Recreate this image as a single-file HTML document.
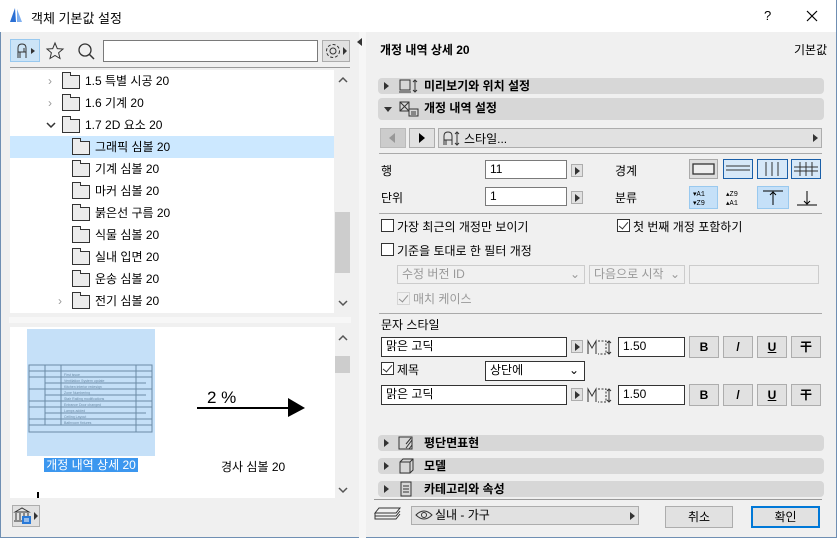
<!DOCTYPE html>
<html><head><meta charset="utf-8"><style>
*{margin:0;padding:0;box-sizing:border-box}
body{width:837px;height:538px;overflow:hidden;background:#f0f0f0;font-family:"Liberation Sans","Noto Sans CJK KR","NanumGothic",sans-serif;font-size:12px;color:#000;position:relative}
.a{position:absolute}
.b{font-weight:bold}
.inp{position:absolute;background:#fff;border:1px solid #7a7a7a;padding-left:4px;line-height:17px}
.arr{position:absolute;width:12px;height:13px;background:#e1e1e1;border:1px solid #adadad}
.arr:after{content:"";position:absolute;left:3px;top:2px;border-left:5px solid #333;border-top:4px solid transparent;border-bottom:4px solid transparent}
.btn{position:absolute;background:#e1e1e1;border:1px solid #adadad;text-align:center}
.bar{position:absolute;left:378px;width:446px;background:#d7d7d7;border-radius:4px;height:16px}
.bar .t{position:absolute;left:6px;top:4px;border-left:5px solid #333;border-top:4px solid transparent;border-bottom:4px solid transparent}
.bar .l{position:absolute;left:46px;top:0;line-height:16px;font-weight:bold}
.cb{position:absolute;width:13px;height:13px;border:1px solid #333;background:#fff}
.ck:after{content:"";position:absolute;left:3px;top:0px;width:4px;height:8px;border-right:1.5px solid #333;border-bottom:1.5px solid #333;transform:rotate(40deg)}
.row{position:absolute;height:22px;line-height:22px;left:10px;width:324px}
.fold{position:absolute;width:18px;height:14px;border:1px solid #333;background:#ececec;top:5px}
.fold:before{content:"";position:absolute;left:-1px;top:-4px;width:7px;height:3px;border:1px solid #333;border-bottom:none;background:#ececec}
.dd{position:absolute;border:1px solid #ccc;background:#f0f0f0;color:#999;padding-left:4px;line-height:17px}
</style></head><body>
<div class="a" style="left:0;top:0;width:837px;height:32px;background:#fff"></div>
<svg class="a" style="left:9px;top:7px" width="14" height="16"><path d="M1 15 L6 1 L7 15Z" fill="#2a6fd4"/><path d="M8 15 L8 2 L13 15Z" fill="#7fb0f0"/></svg>
<div class="a" style="left:31px;top:8px;font-size:13px">객체 기본값 설정</div>
<div class="a" style="left:764px;top:8px;font-size:13px">?</div>
<svg class="a" style="left:806px;top:10px" width="12" height="12"><path d="M1 1L11 11M11 1L1 11" stroke="#000" stroke-width="1.2"/></svg>
<div class="a" style="left:0;top:32px;width:1px;height:506px;background:#6f8fb3"></div>
<div class="a" style="left:836px;top:0;width:1px;height:538px;background:#6f8fb3"></div>
<div class="a" style="left:0;top:537px;width:837px;height:1px;background:#6f8fb3"></div>

<div class="a" style="left:10px;top:39px;width:30px;height:23px;background:#cce4f7;border:1px solid #99c9ef"></div>
<svg class="a" style="left:14px;top:42px" width="24" height="18"><path d="M4 16V6Q4 2 8 2Q12 2 12 6V10H4M12 10V16M6 10V16M10 6V10" stroke="#333" fill="none"/><path d="M17 6L21 9L17 12Z" fill="#333"/></svg>
<svg class="a" style="left:45px;top:41px" width="20" height="20"><path d="M10 2L12.3 7.6 18 8 13.6 11.8 15 17.5 10 14.5 5 17.5 6.4 11.8 2 8 7.7 7.6Z" stroke="#333" fill="none"/></svg>
<svg class="a" style="left:77px;top:42px" width="20" height="20"><circle cx="8" cy="8" r="6" stroke="#333" fill="none" stroke-width="1.3"/><path d="M12.5 12.5L17 17" stroke="#333" stroke-width="1.5"/></svg>
<div class="inp" style="left:103px;top:40px;width:215px;height:22px;border-color:#7a7a7a"></div>
<div class="a" style="left:322px;top:40px;width:28px;height:22px;background:#e1e1e1;border:1px solid #adadad"></div>
<svg class="a" style="left:324px;top:42px" width="26" height="18"><circle cx="9" cy="9" r="3" stroke="#333" fill="none"/><circle cx="9" cy="9" r="6.5" stroke="#333" fill="none" stroke-dasharray="3 2"/><path d="M19 5L23 9L19 13Z" fill="#333"/></svg>
<div class="a" style="left:10px;top:67px;width:340px;height:1px;background:#999"></div>

<div class="a" style="left:10px;top:70px;width:324px;height:243px;background:#fff"></div>
<div class="a" style="left:334px;top:70px;width:16px;height:243px;background:#f0f0f0"></div>
<div class="a" style="left:335px;top:212px;width:15px;height:61px;background:#cdcdcd"></div>
<svg class="a" style="left:338px;top:300px" width="10" height="8"><path d="M1 1L5 5L9 1" stroke="#555" stroke-width="1.5" fill="none"/></svg>
<svg class="a" style="left:338px;top:76px" width="10" height="8"><path d="M1 6L5 2L9 6" stroke="#555" stroke-width="1.5" fill="none"/></svg>
<div class="row" style="top:70px"><span class="a" style="left:38px;color:#999">&#8250;</span><div class="fold" style="left:52px"></div><span class="a" style="left:75px">1.5 특별 시공 20</span></div>
<div class="row" style="top:92px"><span class="a" style="left:38px;color:#999">&#8250;</span><div class="fold" style="left:52px"></div><span class="a" style="left:75px">1.6 기계 20</span></div>
<div class="row" style="top:114px"><svg class="a" style="left:36px;top:8px" width="10" height="8"><path d="M1 1L5 5L9 1" stroke="#333" stroke-width="1.5" fill="none"/></svg><div class="fold" style="left:52px"></div><span class="a" style="left:75px">1.7 2D 요소 20</span></div>
<div class="row" style="top:136px;background:#cce8ff"><div class="fold" style="left:62px"></div><span class="a" style="left:85px">그래픽 심볼 20</span></div>
<div class="row" style="top:158px"><div class="fold" style="left:62px"></div><span class="a" style="left:85px">기계 심볼 20</span></div>
<div class="row" style="top:180px"><div class="fold" style="left:62px"></div><span class="a" style="left:85px">마커 심볼 20</span></div>
<div class="row" style="top:202px"><div class="fold" style="left:62px"></div><span class="a" style="left:85px">붉은선 구름 20</span></div>
<div class="row" style="top:224px"><div class="fold" style="left:62px"></div><span class="a" style="left:85px">식물 심볼 20</span></div>
<div class="row" style="top:246px"><div class="fold" style="left:62px"></div><span class="a" style="left:85px">실내 입면 20</span></div>
<div class="row" style="top:268px"><div class="fold" style="left:62px"></div><span class="a" style="left:85px">운송 심볼 20</span></div>
<div class="row" style="top:290px"><span class="a" style="left:48px;color:#999">&#8250;</span><div class="fold" style="left:62px"></div><span class="a" style="left:85px">전기 심볼 20</span></div>
<div class="a" style="left:9px;top:317px;width:342px;height:6px;background:#f7f7f7"></div>

<div class="a" style="left:10px;top:327px;width:325px;height:171px;background:#fff"></div>
<div class="a" style="left:335px;top:356px;width:15px;height:17px;background:#cdcdcd"></div>
<svg class="a" style="left:338px;top:334px" width="10" height="8"><path d="M1 6L5 2L9 6" stroke="#555" stroke-width="1.5" fill="none"/></svg>
<svg class="a" style="left:338px;top:487px" width="10" height="8"><path d="M1 1L5 5L9 1" stroke="#555" stroke-width="1.5" fill="none"/></svg>
<div class="a" style="left:27px;top:329px;width:128px;height:127px;background:#c5e0f8"></div>
<svg class="a" style="left:28px;top:364px" width="126" height="70"><g stroke="#6a8aa6" fill="none" stroke-width="1"><rect x="1" y="1" width="123" height="67"/><path d="M1 7H124M1 13H124M17 19H118M1 25H124M17 31H118M1 37H124M1 43H124M17 49H118M1 55H124M1 61H124M17 1V61M33 1V61M108 1V68"/></g><g font-size="3.5" fill="#6a8aa6" font-family="Liberation Sans"><text x="36" y="12">First issue</text><text x="36" y="18">Ventilation System update</text><text x="36" y="24">Kitchen interior redesign</text><text x="36" y="30">Zone Numbering</text><text x="36" y="36">Stair Railing modifications</text><text x="36" y="42">Entrance Door changed</text><text x="36" y="48">Lamps added</text><text x="36" y="54">Ceiling Layout</text><text x="36" y="60">Bathroom fixtures</text></g></svg>
<div class="a" style="left:44px;top:458px;width:94px;height:14px;background:#3c97ef;color:#fff;line-height:14px;text-align:center">개정 내역 상세 20</div>
<div class="a" style="left:207px;top:388px;font-size:17px">2 %</div>
<div class="a" style="left:197px;top:407px;width:93px;height:2px;background:#000"></div>
<svg class="a" style="left:288px;top:398px" width="18" height="20"><path d="M0 0L17 10L0 19Z"/></svg>
<div class="a" style="left:221px;top:458px">경사 심볼 20</div>
<div class="a" style="left:37px;top:492px;width:2px;height:6px;background:#000"></div>
<div class="a" style="left:12px;top:505px;width:28px;height:22px;background:#e1e1e1;border:1px solid #adadad"></div>
<svg class="a" style="left:13px;top:507px" width="27" height="18"><path d="M2 5L9 1L16 5ZM3 6V13M7 6V13M11 6V13M15 6V13M1 14H17" stroke="#333" fill="none"/><rect x="9" y="9" width="9" height="8" fill="#2a7ad8"/><path d="M11 12H16M11 14H16" stroke="#fff"/><path d="M21 5L25 9L21 13Z" fill="#333"/></svg>

<div class="a" style="left:359px;top:32px;width:7px;height:506px;background:#f6f6f6"></div>
<svg class="a" style="left:357px;top:38px" width="6" height="8"><path d="M5 0L0 4L5 8Z" fill="#333"/></svg>

<div class="a b" style="left:380px;top:41px">개정 내역 상세 20</div>
<div class="a" style="left:794px;top:41px">기본값</div>
<div class="bar" style="top:78px"><div class="t"></div>
<svg class="a" style="left:20px;top:0" width="22" height="16"><rect x="2" y="2" width="10" height="10" stroke="#333" fill="none"/><path d="M1 14H13M17 2V14M15 4L17 2L19 4M15 12L17 14L19 12" stroke="#333" fill="none"/></svg><span class="l">미리보기와 위치 설정</span></div>
<div class="bar" style="top:98px;height:22px"><div class="t" style="top:9px;border-top:5px solid #333;border-left:4px solid transparent;border-right:4px solid transparent;border-bottom:none"></div>
<svg class="a" style="left:20px;top:2px" width="22" height="18"><rect x="2" y="2" width="9" height="9" stroke="#333" fill="none"/><path d="M2 2L11 11M11 2L2 11" stroke="#333"/><rect x="11" y="9" width="9" height="7" stroke="#333" fill="none"/><path d="M13 12H18M13 14H18" stroke="#333"/></svg><span class="l" style="line-height:20px">개정 내역 설정</span></div>
<div class="a" style="left:380px;top:128px;width:26px;height:20px;background:#ccc;border:1px solid #bbb"></div>
<svg class="a" style="left:389px;top:133px" width="8" height="10"><path d="M6 0L0 5L6 10Z" fill="#999"/></svg>
<div class="btn" style="left:409px;top:128px;width:26px;height:20px"></div>
<svg class="a" style="left:419px;top:133px" width="8" height="10"><path d="M0 0L6 5L0 10Z" fill="#000"/></svg>
<div class="btn" style="left:438px;top:128px;width:384px;height:20px"></div>
<svg class="a" style="left:442px;top:130px" width="22" height="18"><path d="M2 15V6Q2 2 6 2Q10 2 10 6V10H2M10 10V15M4 10V15M15 2V15M13 4L15 2L17 4M13 13L15 15L17 13" stroke="#333" fill="none"/></svg>
<div class="a" style="left:464px;top:130px">스타일...</div>
<svg class="a" style="left:813px;top:134px" width="6" height="8"><path d="M0 0L5 4L0 8Z" fill="#333"/></svg>
<div class="a" style="left:379px;top:153px;width:443px;height:1px;background:#aaa"></div>

<div class="a" style="left:381px;top:162px">행</div>
<div class="inp" style="left:485px;top:160px;width:82px;height:19px">11</div>
<div class="arr" style="left:571px;top:164px"></div>
<div class="a" style="left:615px;top:162px">경계</div>
<div class="a" style="left:381px;top:189px">단위</div>
<div class="inp" style="left:485px;top:187px;width:82px;height:19px">1</div>
<div class="arr" style="left:571px;top:191px"></div>
<div class="a" style="left:615px;top:189px">분류</div>
<svg class="a" style="left:689px;top:159px" width="134" height="52">
<rect x="0.5" y="0.5" width="28" height="19" fill="#ddd" stroke="#aaa"/><rect x="4" y="5" width="21" height="10" fill="#eee" stroke="#333" stroke-width="1.3"/>
<rect x="34.5" y="0.5" width="29" height="19" fill="#d6e8f8" stroke="#1a5fa8"/><path d="M37 7H61M37 11H61" stroke="#333"/>
<rect x="68.5" y="0.5" width="30" height="19" fill="#d6e8f8" stroke="#1a5fa8"/><path d="M77 3V17M83 3V17M89 3V17" stroke="#333"/>
<rect x="102.5" y="0.5" width="29" height="19" fill="#d6e8f8" stroke="#1a5fa8"/><path d="M105 8H129M105 12H129M111 3V17M117 3V17M123 3V17" stroke="#333"/>
<rect x="0.5" y="27.5" width="28" height="22" fill="#c5e0f8" stroke="#99c9ef"/><text x="4" y="37" font-size="7" font-family="Liberation Mono">▾A1</text><text x="4" y="46" font-size="7" font-family="Liberation Mono">▾Z9</text>
<text x="37" y="37" font-size="7" font-family="Liberation Mono">▴Z9</text><text x="37" y="46" font-size="7" font-family="Liberation Mono">▴A1</text>
<rect x="68.5" y="27.5" width="31" height="22" fill="#c5e0f8" stroke="#99c9ef"/><path d="M74 32H94M84 33V46M81 36L84 33L87 36" stroke="#000" fill="none"/>
<path d="M108 46H128M118 32V45M115 42L118 45L121 42" stroke="#000" fill="none"/>
</svg>
<div class="a" style="left:379px;top:213px;width:443px;height:1px;background:#aaa"></div>

<div class="cb" style="left:381px;top:219px"></div><div class="a" style="left:397px;top:218px">가장 최근의 개정만 보이기</div>
<div class="cb ck" style="left:617px;top:219px"></div><div class="a" style="left:633px;top:218px">첫 번째 개정 포함하기</div>
<div class="cb" style="left:381px;top:243px"></div><div class="a" style="left:397px;top:242px">기준을 토대로 한 필터 개정</div>
<div class="dd" style="left:397px;top:265px;width:188px;height:19px">수정 버전 ID<span class="a" style="right:4px;top:0">&#8964;</span></div>
<div class="dd" style="left:589px;top:265px;width:96px;height:19px">다음으로 시작<span class="a" style="right:4px;top:0">&#8964;</span></div>
<div class="dd" style="left:689px;top:265px;width:130px;height:19px"></div>
<div class="cb ck" style="left:397px;top:292px;border-color:#bbb;background:#f0f0f0;opacity:.5"></div><div class="a" style="left:413px;top:290px;color:#999">매치 케이스</div>
<div class="a" style="left:379px;top:313px;width:443px;height:1px;background:#aaa"></div>
<div class="a" style="left:381px;top:316px">문자 스타일</div>

<div class="inp" style="left:381px;top:337px;width:186px;height:20px;border-color:#333">맑은 고딕</div>
<div class="arr" style="left:571px;top:340px"></div>
<svg class="a" style="left:587px;top:339px" width="26" height="17"><path d="M1 15V2L5 9L9 2V15" stroke="#333" fill="none"/><path d="M11 2H19V15H11" stroke="#333" fill="none" stroke-dasharray="2 1.5"/><path d="M22 2V15M20 4L22 2L24 4M20 13L22 15L24 13" stroke="#333" fill="none"/></svg>
<div class="inp" style="left:618px;top:337px;width:67px;height:20px;border-color:#333">1.50</div>
<div class="btn b" style="left:689px;top:336px;width:30px;height:22px;line-height:20px">B</div>
<div class="btn b" style="left:723px;top:336px;width:30px;height:22px;line-height:20px">/</div>
<div class="btn b" style="left:757px;top:336px;width:30px;height:22px;line-height:20px;text-decoration:underline">U</div>
<div class="btn b" style="left:791px;top:336px;width:30px;height:22px;line-height:20px">干</div>

<div class="cb ck" style="left:381px;top:362px"></div><div class="a" style="left:397px;top:361px">제목</div>
<div class="inp" style="left:485px;top:361px;width:100px;height:20px;border-color:#333">상단에<span class="a" style="right:5px;top:0">&#8964;</span></div>

<div class="inp" style="left:381px;top:385px;width:186px;height:20px;border-color:#333">맑은 고딕</div>
<div class="arr" style="left:571px;top:388px"></div>
<svg class="a" style="left:587px;top:387px" width="26" height="17"><path d="M1 15V2L5 9L9 2V15" stroke="#333" fill="none"/><path d="M11 2H19V15H11" stroke="#333" fill="none" stroke-dasharray="2 1.5"/><path d="M22 2V15M20 4L22 2L24 4M20 13L22 15L24 13" stroke="#333" fill="none"/></svg>
<div class="inp" style="left:618px;top:385px;width:67px;height:20px;border-color:#333">1.50</div>
<div class="btn b" style="left:689px;top:384px;width:30px;height:22px;line-height:20px">B</div>
<div class="btn b" style="left:723px;top:384px;width:30px;height:22px;line-height:20px">/</div>
<div class="btn b" style="left:757px;top:384px;width:30px;height:22px;line-height:20px;text-decoration:underline">U</div>
<div class="btn b" style="left:791px;top:384px;width:30px;height:22px;line-height:20px">干</div>

<div class="bar" style="top:435px"><div class="t"></div><svg class="a" style="left:20px;top:1px" width="20" height="15"><rect x="1" y="1" width="13" height="12" stroke="#333" fill="none"/><path d="M8 12L14 4M11 13L14 9M8 8L13 2" stroke="#333"/></svg><span class="l">평단면표현</span></div>
<div class="bar" style="top:458px"><div class="t"></div><svg class="a" style="left:20px;top:0" width="20" height="16"><path d="M2 4L5 1H15V12L12 15H2ZM2 4H12V15M12 4L15 1" stroke="#333" fill="none"/></svg><span class="l">모델</span></div>
<div class="bar" style="top:481px"><div class="t"></div><svg class="a" style="left:22px;top:0" width="14" height="16"><rect x="1" y="1" width="10" height="14" stroke="#333" fill="none"/><path d="M3 5H9M3 8H9M3 11H9" stroke="#333"/></svg><span class="l">카테고리와 속성</span></div>
<div class="a" style="left:374px;top:499px;width:448px;height:1px;background:#999"></div>

<svg class="a" style="left:374px;top:507px" width="28" height="16"><path d="M5 1H26L22 6H1ZM1 6V9H22L26 4M1 9V12H22L26 7" stroke="#333" fill="none"/></svg>
<div class="btn" style="left:411px;top:506px;width:228px;height:19px"></div>
<svg class="a" style="left:415px;top:510px" width="18" height="11"><path d="M1 5Q9 -3 17 5Q9 13 1 5Z" stroke="#333" fill="none"/><circle cx="9" cy="5" r="2.5" stroke="#333" fill="none"/></svg>
<div class="a" style="left:435px;top:506px">실내 - 가구</div>
<svg class="a" style="left:630px;top:512px" width="6" height="8"><path d="M0 0L5 4L0 8Z" fill="#333"/></svg>
<div class="btn" style="left:665px;top:506px;width:68px;height:22px;line-height:20px">취소</div>
<div class="btn" style="left:751px;top:506px;width:69px;height:22px;line-height:18px;border:2px solid #0078d7">확인</div>
</body></html>
